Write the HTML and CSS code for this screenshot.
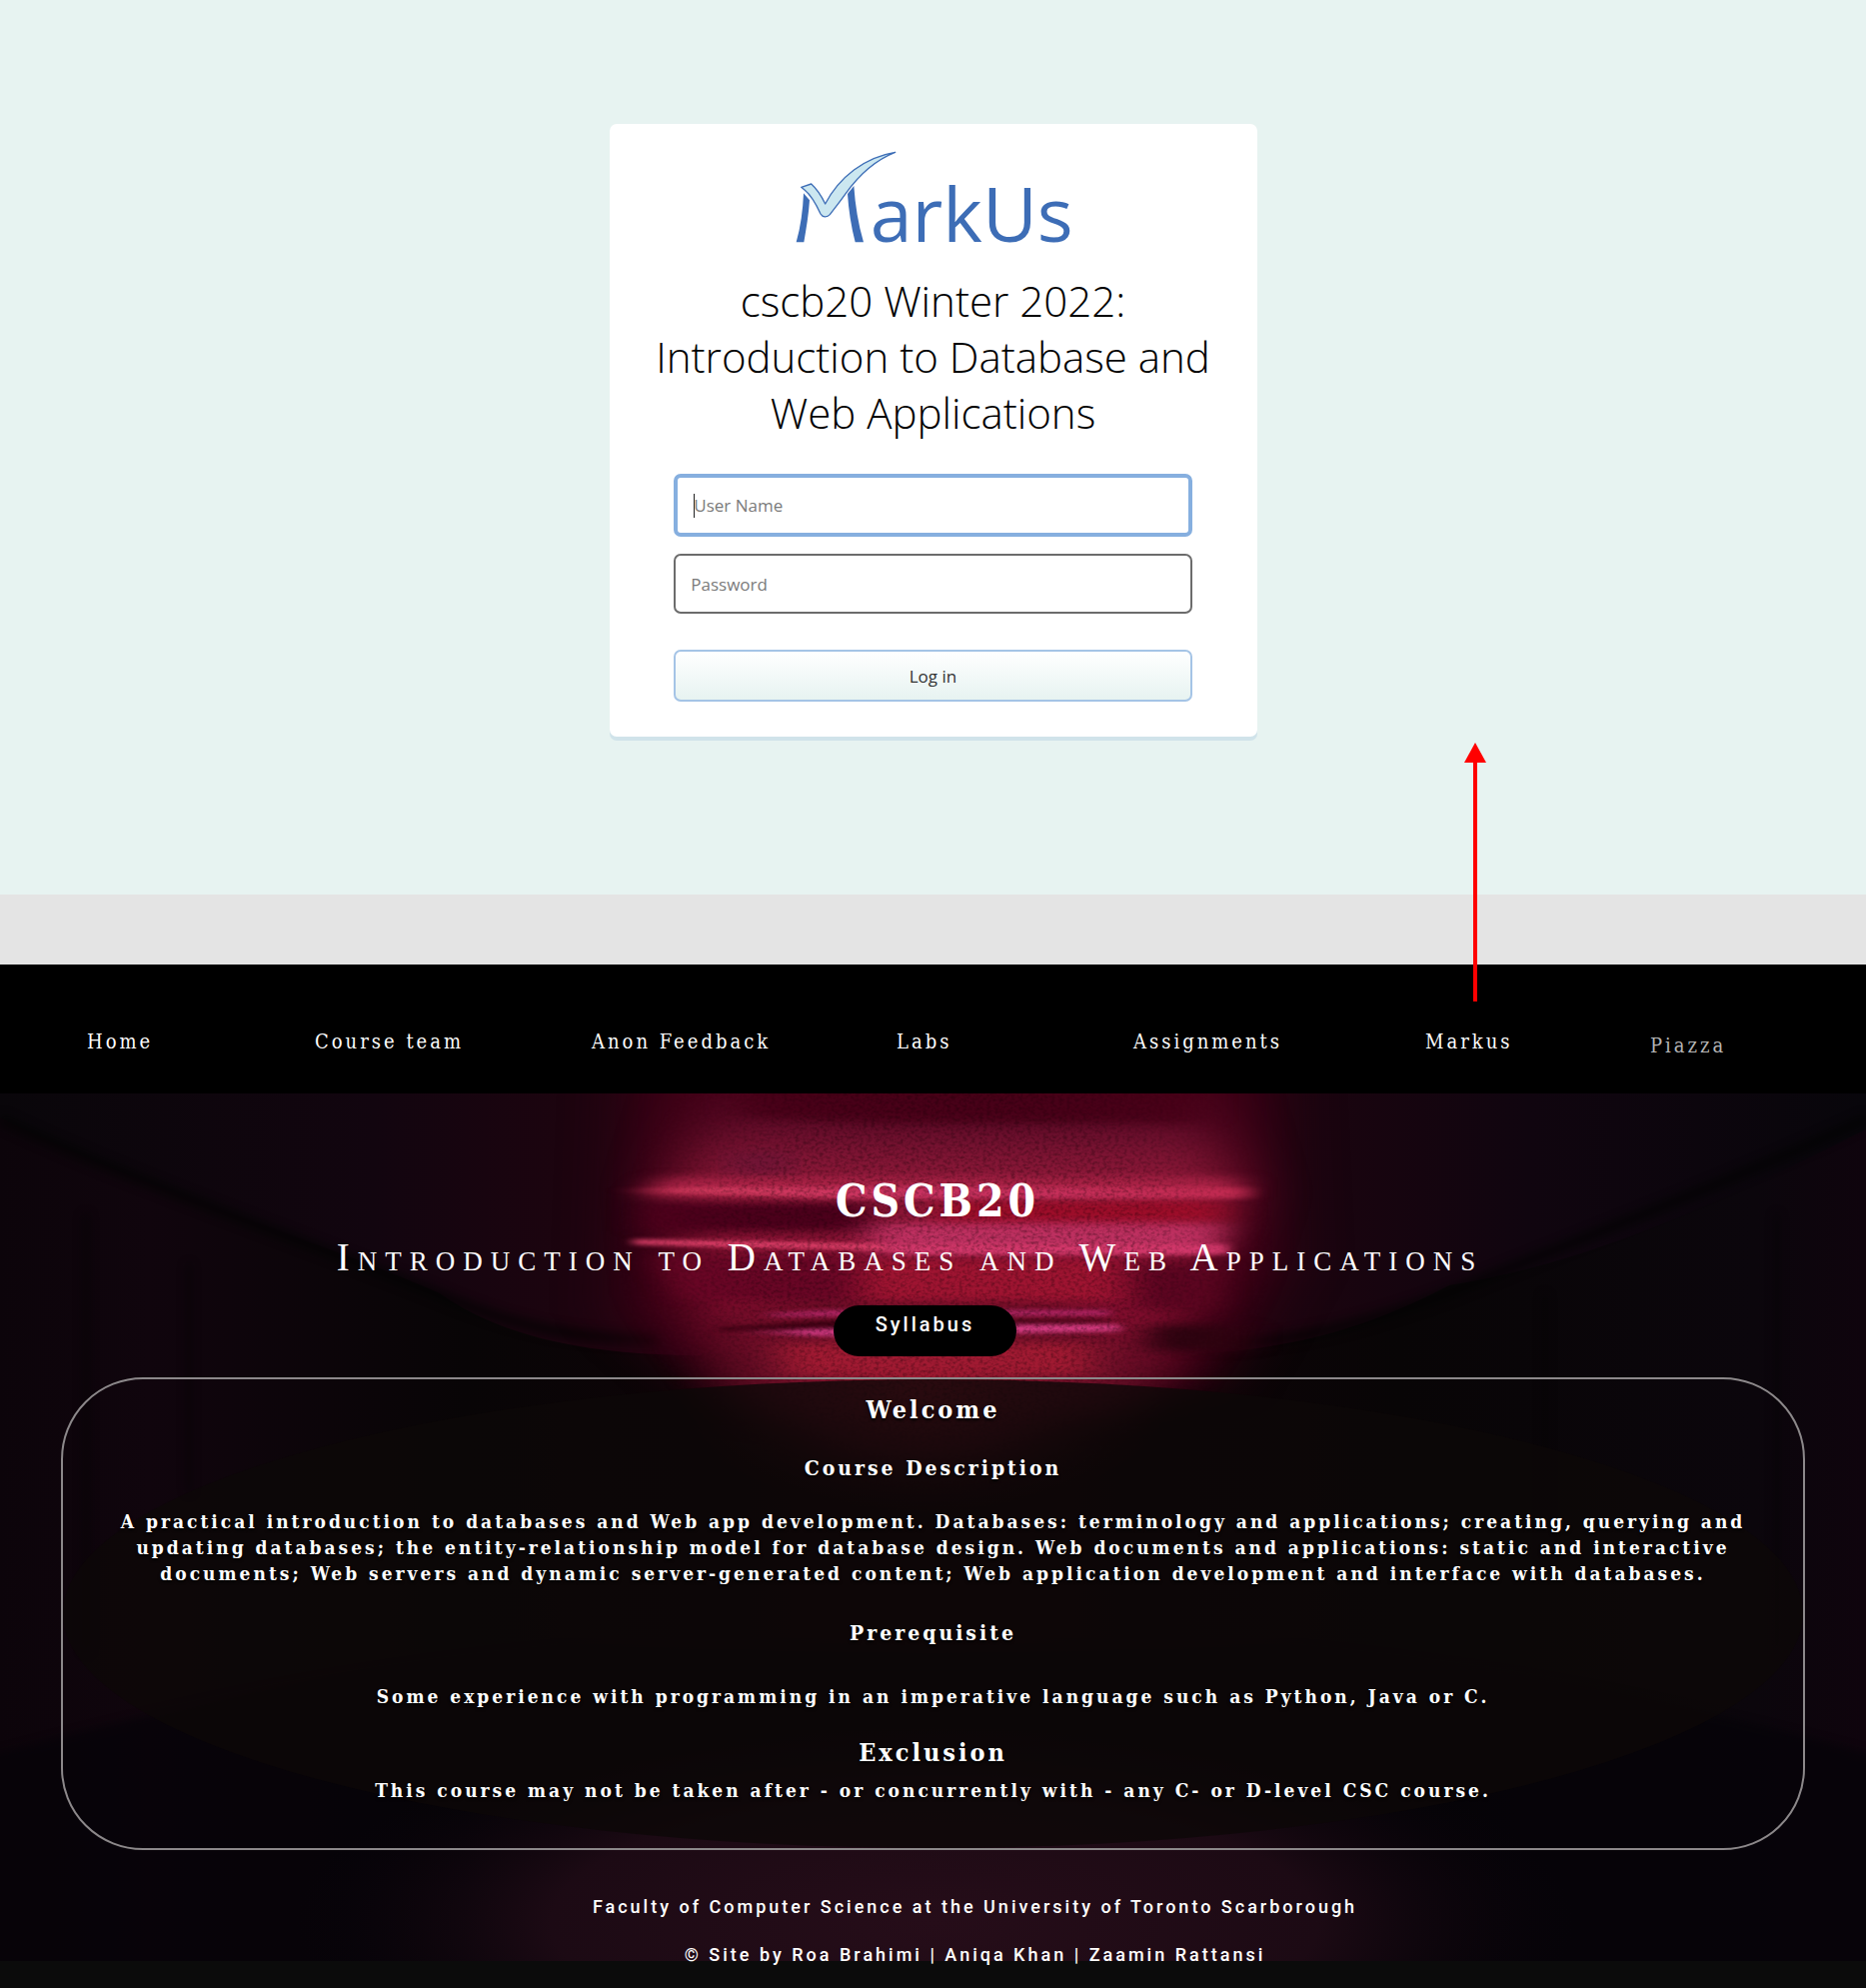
FILE: index.html
```html
<!DOCTYPE html>
<html lang="en">
<head>
<meta charset="utf-8">
<meta name="viewport" content="width=device-width, initial-scale=1">
<title>CSCB20</title>
<link rel="stylesheet" href="styles.css">
</head>
<body>
<section class="login">
  <div class="card">
    <svg class="logo" viewBox="0 0 930 384" role="img" aria-label="MarkUs">
      <path fill="#3d6db6" d="M75 160 L93 181 C90 226 83 266 76 307 H53 C66 262 73 212 75 160Z"/>
      <path fill="#3d6db6" d="M207 162 L226 138 C230 196 239 252 255 307 H230 C218 260 210 210 207 162Z"/>
      <path fill="#cbe7f0" stroke="#3d6db6" stroke-width="4" stroke-linejoin="round" d="M68 142 L98 132 C118 150 130 171 140 192 C182 112 258 52 350 37 C292 60 240 107 202 160 C182 188 166 208 154 224 C146 233 132 233 126 222 C111 189 94 163 78 150Z"/>
      <text class="logo-text" x="275" y="307">arkUs</text>
    </svg>
    <h1 class="card-title">cscb20 Winter 2022:<br>Introduction to Database and<br>Web Applications</h1>
    <form class="form">
      <div class="field">
        <input class="input input-focus" type="text" placeholder="User Name" aria-label="User Name">
        <span class="caret"></span>
      </div>
      <input class="input" type="password" placeholder="Password" aria-label="Password">
      <button class="submit" type="button">Log in</button>
    </form>
  </div>
</section>
<div class="divider"></div>
<nav class="nav">
  <a href="#">Home</a>
  <a href="#">Course team</a>
  <a href="#">Anon Feedback</a>
  <a href="#">Labs</a>
  <a href="#">Assignments</a>
  <a class="has-arrow" href="#">Markus
    <svg class="arrow" viewBox="0 0 22 259" aria-hidden="true"><path fill="#f00" d="M11 0 L22 20 H13 V259 H9 V20 H0Z"/></svg>
  </a>
  <a class="muted" href="#">Piazza</a>
</nav>
<main class="hero">
  <svg class="backdrop" viewBox="0 0 1867 868" preserveAspectRatio="none" aria-hidden="true">
    <defs>
      <linearGradient id="ceil" x1="0" x2="1">
        <stop offset="0" stop-color="#09060a"/><stop offset=".2" stop-color="#12050f"/><stop offset=".31" stop-color="#1d040f"/>
        <stop offset=".5" stop-color="#2c0413"/><stop offset=".67" stop-color="#1d040f"/><stop offset=".82" stop-color="#10050f"/><stop offset="1" stop-color="#08060b"/>
      </linearGradient>
      <linearGradient id="wall" x1="0" x2="1">
        <stop offset="0" stop-color="#0c040a"/><stop offset=".08" stop-color="#10050d"/><stop offset=".25" stop-color="#080506"/>
        <stop offset=".5" stop-color="#120308"/><stop offset=".75" stop-color="#080506"/><stop offset=".94" stop-color="#0b060c"/><stop offset="1" stop-color="#0f040d"/>
      </linearGradient>
      <linearGradient id="glow" x1="0" x2="0" y1="0" y2="1">
        <stop offset="0" stop-color="#450017"/><stop offset=".16" stop-color="#5a0a26"/><stop offset=".3" stop-color="#8a1838"/>
        <stop offset=".45" stop-color="#8c1636"/><stop offset=".6" stop-color="#780a2a"/><stop offset=".8" stop-color="#8d1233"/><stop offset="1" stop-color="#7a1530"/>
      </linearGradient>
      <linearGradient id="streak" x1="0" x2="1">
        <stop offset="0" stop-color="#c02850" stop-opacity="0"/><stop offset=".12" stop-color="#d03a5c"/><stop offset=".5" stop-color="#c83260"/><stop offset=".95" stop-color="#c02a50"/><stop offset="1" stop-color="#c02a50" stop-opacity="0"/>
      </linearGradient>
      <linearGradient id="fade" x1="0" x2="1">
        <stop offset="0" stop-color="#c83280" stop-opacity="0"/><stop offset=".2" stop-color="#d43b87"/><stop offset="1" stop-color="#d43b80"/>
      </linearGradient>
      <radialGradient id="floor">
        <stop offset="0" stop-color="#260d19"/><stop offset=".6" stop-color="#1c0a14"/><stop offset="1" stop-color="#0b040c" stop-opacity="0"/>
      </radialGradient>
      <radialGradient id="under">
        <stop offset="0" stop-color="#a0182f"/><stop offset=".5" stop-color="#6c1026" stop-opacity=".75"/><stop offset="1" stop-color="#300410" stop-opacity="0"/>
      </radialGradient>
      <radialGradient id="spot">
        <stop offset="0" stop-color="#fff"/><stop offset=".6" stop-color="#fff"/><stop offset="1" stop-color="#000"/>
      </radialGradient>
      <filter id="b2" color-interpolation-filters="sRGB" x="-10%" y="-80%" width="120%" height="260%"><feGaussianBlur stdDeviation="6 2"/></filter>
      <filter id="soft" color-interpolation-filters="sRGB" x="-10%" y="-20%" width="120%" height="140%"><feGaussianBlur stdDeviation="5"/></filter>
      <filter id="b8" color-interpolation-filters="sRGB" x="-20%" y="-60%" width="140%" height="220%"><feGaussianBlur stdDeviation="18 4"/></filter>
      <filter id="b40" color-interpolation-filters="sRGB" x="-40%" y="-40%" width="180%" height="180%"><feGaussianBlur stdDeviation="34 14"/></filter>
      <filter id="grain" color-interpolation-filters="sRGB" x="0" y="0" width="100%" height="100%">
        <feTurbulence type="fractalNoise" baseFrequency=".25 .35" numOctaves="3" seed="4"/>
        <feColorMatrix values="0 0 0 0 .1  0 0 0 0 0  0 0 0 0 .03  0 0 0 2.4 -1"/>
      </filter>
      <mask id="lit"><ellipse cx="945" cy="150" rx="330" ry="250" fill="url(#spot)"/></mask>
    </defs>
    <rect width="1867" height="868" fill="url(#wall)"/>
    <path fill="url(#ceil)" d="M0 0 H1867 V36 C1720 110 1590 170 1450 192 C1340 250 1250 262 1130 262 H700 C610 262 510 250 440 200 C290 135 150 100 0 24Z"/>
    <g fill="none" stroke="#030303" stroke-width="12" opacity=".65" filter="url(#soft)">
      <path d="M0 26 C150 96 300 145 440 202 C520 236 580 246 660 246"/>
      <path d="M1867 26 C1720 94 1570 150 1450 200 C1350 236 1290 250 1200 252"/>
    </g>
    <g fill="#030203" opacity=".45" filter="url(#soft)">
      <path d="M82 120 H90 V560 H82Z"/><path d="M186 170 H192 V400 H186Z"/><path d="M1543 200 H1549 V480 H1543Z"/><path d="M1775 120 H1781 V560 H1775Z"/>
    </g>
    <path fill="#3d0015" filter="url(#b40)" d="M640 -40 H1265 L1275 170 L1200 300 H720 L630 220Z"/>
    <path fill="url(#glow)" filter="url(#b40)" d="M720 -30 H1195 L1235 100 L1200 200 L1120 320 H770 L690 200 L680 90Z"/>
    <ellipse cx="925" cy="292" rx="250" ry="130" fill="url(#under)"/>
    <path fill="#450016" opacity=".8" filter="url(#b8)" d="M740 -20 H1200 V30 H880 L740 24Z"/>
    <path fill="#651436" opacity=".6" filter="url(#b8)" d="M730 58 H790 V84 H730Z"/>
    <g filter="url(#b8)">
      <path fill="#a82245" d="M665 84 H1235 V104 H645Z"/>
      <path fill="#4b001b" d="M650 109 H870 V138 H650Z"/>
      <path fill="#9c0d29" d="M940 108 H1225 V128 H940Z"/>
      <path fill="#bd3060" d="M870 130 H1225 L1215 160 H870Z"/>
      <path fill="#680625" d="M660 164 H860 V206 H690Z"/>
      <path fill="#9e1431" d="M860 166 H1120 V208 H860Z"/>
      <path fill="#5a0520" d="M1140 172 H1210 V215 H1140Z"/>
      <path fill="#2e0310" d="M1150 232 H1240 V258 H1150Z"/>
      <path fill="#a01a32" d="M780 250 H1090 V282 H790Z"/>
    </g>
    <g filter="url(#b2)">
      <path fill="url(#streak)" d="M605 97 L720 94 H1262 V105 H850Z"/>
      <path fill="#e0406a" d="M633 146 L760 148 L890 151 V157 L740 154 L634 151Z"/>
      <path fill="#d2386a" d="M880 151 H1228 V161 L900 161Z"/>
      <path fill="#b7276a" d="M760 221 L830 217 H1110 V222 L780 223Z"/>
      <path fill="#3c0012" d="M720 234 L840 227 H1110 V229 L850 234 L720 238Z"/>
      <path fill="url(#fade)" d="M730 239 L840 235 L1010 231 H1120 V238 L840 243Z"/>
    </g>
    <g mask="url(#lit)"><rect width="1867" height="400" filter="url(#grain)" opacity=".35"/></g>
    <path fill="#050308" opacity=".7" filter="url(#soft)" d="M-40 670 C150 620 300 580 560 555 H1300 C1560 580 1720 620 1907 670 V900 H-40Z"/>
    <ellipse cx="935" cy="830" rx="640" ry="210" fill="url(#floor)"/>
  </svg>
  <div class="content">
    <h2 class="course">CSCB20</h2>
    <p class="subtitle">Introduction to Databases and Web Applications</p>
    <a class="pill" href="#">Syllabus</a>
    <section class="panel">
      <h3 class="head">Welcome</h3>
      <h4 class="subhead">Course Description</h4>
      <p class="body-text">A practical introduction to databases and Web app development. Databases: terminology and applications; creating, querying and<br>updating databases; the entity-relationship model for database design. Web documents and applications: static and interactive<br>documents; Web servers and dynamic server-generated content; Web application development and interface with databases.</p>
      <h4 class="subhead prereq">Prerequisite</h4>
      <p class="body-text prereq-text">Some experience with programming in an imperative language such as Python, Java or C.</p>
      <h3 class="head exclusion">Exclusion</h3>
      <p class="body-text exclusion-text">This course may not be taken after - or concurrently with - any C- or D-level CSC course.</p>
    </section>
    <footer class="footer">
      <p>Faculty of Computer Science at the University of Toronto Scarborough</p>
      <p>© Site by Roa Brahimi | Aniqa Khan | Zaamin Rattansi</p>
    </footer>
  </div>
</main>
</body>
</html>
```

FILE: styles.css
```css
* { box-sizing: border-box; }
body { margin: 0; background: #0b0b0b; font-family: "Open Sans", sans-serif; }
h1, h2, h3, h4, p { margin: 0; }
a { color: inherit; text-decoration: none; }

.login { background: #e7f3f1; padding: 124px 16px 158px; }
.card {
  max-width: 648px; margin: 0 auto; padding: 16px 0 35px;
  background: #fff; border-radius: 7px; box-shadow: 0 4px 0 #d0e3ea;
  display: flex; flex-direction: column; align-items: center;
}
.logo { width: 310px; height: 128px; display: block; }
.logo-text { font-family: "Open Sans", sans-serif; font-size: 226px; fill: #3d6db6; }
.card-title { margin-top: 5px; font-weight: 300; font-size: 42px; line-height: 56px; text-align: center; color: #000; }
.form { width: 80%; margin-top: 33px; display: flex; flex-direction: column; }
.field { position: relative; margin-bottom: 17px; }
.input {
  display: block; width: 100%; height: 60px; padding: 0 15px; border: 2px solid #6c6c6c; border-radius: 7px;
  background: #fff; font: 17px "Open Sans", sans-serif; outline: 0;
}
.input::placeholder { color: #7b7b7b; opacity: 1; }
.input-focus { height: 63px; border: 4px solid #86afdf; padding: 0 16px; }
.caret { position: absolute; left: 20px; top: 20px; width: 1px; height: 24px; background: #222; }
.submit {
  height: 52px; margin-top: 36px; border: 2px solid #a5c4e6; border-radius: 7px;
  background: linear-gradient(#fff, #e7f3f1); font: 17px "Open Sans", sans-serif; color: #333;
}
.divider { height: 70px; background: #e4e4e4; }

.nav {
  min-height: 129px; padding: 63px 6px 34px 87px; background: #000; color: #fff;
  display: grid; grid-template-columns: 228fr 277fr 305fr 237fr 292fr 225fr 210fr; align-items: start;
  font: 20px/28px "DejaVu Serif Condensed", "DejaVu Serif", serif; letter-spacing: 3px; white-space: nowrap;
}
.nav a { justify-self: start; }
.nav .muted { align-self: end; color: #b5b5b5; }
.has-arrow { position: relative; }
.arrow { position: absolute; left: 39px; bottom: 54px; width: 22px; height: 259px; }

.hero { position: relative; background: #0b0b0b; color: #fff; padding: 78px 61px 21px; text-align: center; }
.backdrop { position: absolute; left: 0; top: 0; width: 100%; height: calc(100% - 27px); }
.content { position: relative; display: flex; flex-direction: column; align-items: center; }
.course { padding-left: 9px; font: bold 44px/60px "DejaVu Serif Condensed", "DejaVu Serif", serif; letter-spacing: 4px; }
.subtitle { margin-top: 2px; padding-right: 46px; font: 39px/48px "Liberation Serif", serif; font-variant: small-caps; letter-spacing: 8px; }
.pill {
  margin: 24px 16px 0 0; width: 183px; height: 51px; padding-top: 7px; border-radius: 26px; background: #000;
  font: 500 20px/24px Roboto, sans-serif; letter-spacing: 3px;
}
.panel {
  align-self: stretch; margin-top: 21px; padding: 15px 0 45px; position: relative;
  border: 2px solid #8c888a; border-radius: 82px;
  font: bold 19px/26px "DejaVu Serif Condensed", "DejaVu Serif", serif; letter-spacing: 3px; text-shadow: 0 2px 3px #000;
}
.panel::before { content: ""; position: absolute; inset: 0; border-radius: 50%; background: rgba(12, 7, 7, .8); }
.panel > * { position: relative; }
.head { font-size: 25px; line-height: 32px; }
.subhead { margin-top: 28px; font-size: 21px; line-height: 28px; }
.body-text { margin-top: 26px; }
.prereq { margin-top: 33px; }
.prereq-text { margin-top: 36px; }
.exclusion { margin-top: 28px; }
.exclusion-text { margin-top: 8px; }
.footer { margin-top: 45px; padding-left: 84px; font: 500 18px/24px Roboto, sans-serif; letter-spacing: 3px; display: grid; gap: 24px; }
```
